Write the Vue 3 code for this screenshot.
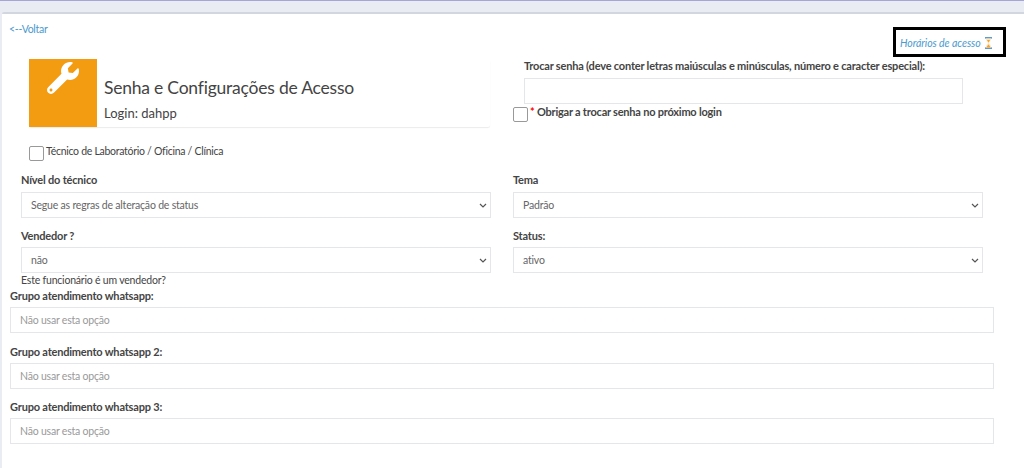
<template>
  <div class="page">
    <div class="topbar"></div>
    <main class="card">
      <div class="toprow">
        <a class="link back">&lt;--Voltar</a>
        <div class="hours">
          <a class="link italic">Horários de acesso</a>
          <svg class="glass" viewBox="0 0 9 12" width="9" height="12">
            <rect x="1" y="0" width="7" height="1.6" fill="#5b9bd0" />
            <rect x="1" y="10.4" width="7" height="1.6" fill="#5b9bd0" />
            <path d="M2 1.6h5C7 4 5.2 5 5 6c.2 1 2 2 2 4.4H2C2 8 3.8 7 4 6 3.8 5 2 4 2 1.6z" fill="#fde6bd" />
            <path d="M2.6 10.4C3 9 4 8 4.5 7.4 5 8 6 9 6.4 10.4zM3 3h3L4.5 5.4z" fill="#f5a32c" />
          </svg>
        </div>
      </div>

      <div class="columns">
        <div class="col-left">
          <div class="infobox">
            <div class="infoicon">
              <svg viewBox="0 0 512 512" width="32" height="32">
                <path fill="#fff" d="M507.73 109.1c-2.24-9.03-13.54-12.09-20.12-5.51l-74.36 74.36-67.88-11.31-11.31-67.88 74.36-74.36c6.62-6.62 3.43-17.9-5.66-20.16-47.38-11.74-99.55.91-136.58 37.93-39.64 39.64-50.55 97.1-34.05 147.2L18.74 402.76c-24.99 24.99-24.99 65.51 0 90.5 24.99 24.99 65.51 24.99 90.5 0l213.21-213.21c50.12 16.71 107.47 5.68 147.37-34.22 37.07-37.07 49.7-89.32 37.91-136.73zM64 472c-13.25 0-24-10.75-24-24 0-13.26 10.75-24 24-24s24 10.74 24 24c0 13.25-10.75 24-24 24z" />
              </svg>
            </div>
            <div class="infotext">
              <div class="title">Senha e Configurações de Acesso</div>
              <div class="login">Login: dahpp</div>
            </div>
          </div>
          <label class="check tech"><span class="box"></span><span class="techtext">Técnico de Laboratório / Oficina / Clínica</span></label>
        </div>
        <div class="col-right">
          <div class="label">Trocar senha (deve conter letras maiúsculas e minúsculas, número e caracter especial):</div>
          <div class="control pass"></div>
          <label class="check force"><span class="box"></span><span class="label forcetext"><span class="req">*</span> Obrigar a trocar senha no próximo login</span></label>
        </div>
      </div>

      <div class="formgrid">
        <div class="field">
          <div class="label">Nível do técnico</div>
          <div class="control select"><span>Segue as regras de alteração de status</span><svg class="chev" viewBox="0 0 8 5" width="8" height="5"><path d="M1 1l3 3 3-3" fill="none" stroke="#555" stroke-width="1.2" /></svg></div>
        </div>
        <div class="field">
          <div class="label">Tema</div>
          <div class="control select"><span>Padrão</span><svg class="chev" viewBox="0 0 8 5" width="8" height="5"><path d="M1 1l3 3 3-3" fill="none" stroke="#555" stroke-width="1.2" /></svg></div>
        </div>
        <div class="field">
          <div class="label">Vendedor ?</div>
          <div class="control select"><span>não</span><svg class="chev" viewBox="0 0 8 5" width="8" height="5"><path d="M1 1l3 3 3-3" fill="none" stroke="#555" stroke-width="1.2" /></svg></div>
          <div class="hint">Este funcionário é um vendedor?</div>
        </div>
        <div class="field">
          <div class="label">Status:</div>
          <div class="control select"><span>ativo</span><svg class="chev" viewBox="0 0 8 5" width="8" height="5"><path d="M1 1l3 3 3-3" fill="none" stroke="#555" stroke-width="1.2" /></svg></div>
        </div>
      </div>

      <div class="groups">
        <div class="group" v-for="g in groups" :key="g">
          <div class="label">{{ g }}</div>
          <div class="control placeholder">Não usar esta opção</div>
        </div>
      </div>
    </main>
  </div>
</template>

<script setup>
const groups = [
  'Grupo atendimento whatsapp:',
  'Grupo atendimento whatsapp 2:',
  'Grupo atendimento whatsapp 3:'
]
</script>

<style>
html, body { margin: 0; background: #fff; }
</style>

<style scoped>
.page {
  width: 1024px;
  height: 468px;
  overflow: hidden;
  background: #e9ecf3;
  font-family: Lato, "Noto Sans", sans-serif;
  font-size: 11px;
  color: #444;
  box-sizing: border-box;
  border-top: 1px solid #a6a6d6;
}
.topbar { height: 11px; }
.card {
  margin-left: 2px;
  height: 456px;
  background: #fff;
  border-top: 2px solid #d2d6de;
  border-radius: 2px 0 0 0;
  padding-left: 8px;
  box-sizing: border-box;
}
.toprow {
  display: flex;
  justify-content: space-between;
  align-items: flex-start;
  padding-top: 8px;
}
.link { color: #4a9ace; font-size: 10.5px; line-height: 14px; }
.back { margin-left: -1px; letter-spacing: -0.3px; }
.italic { font-style: italic; letter-spacing: -0.05px; }
.hours {
  margin: 5px 18px 0 0;
  width: 113px;
  height: 30px;
  box-sizing: border-box;
  border: 3px solid #000;
  display: flex;
  align-items: center;
  padding: 1px 0 0 4px;
  gap: 3px;
}
.columns { display: flex; margin-top: 2px; }
.col-left { width: 461px; margin-left: 19px; }
.col-right { margin-left: 34px; width: 440px; }
.infobox {
  height: 68px;
  display: flex;
  box-shadow: 0 1px 1px rgba(0, 0, 0, 0.08);
  border-radius: 2px;
}
.infoicon {
  width: 68px;
  height: 68px;
  background: #f39c12;
  display: flex;
  justify-content: center;
  padding-top: 3px;
  box-sizing: border-box;
}
.infotext { padding: 17px 0 0 7px; }
.title { font-size: 17.5px; line-height: 24px; color: #444; letter-spacing: -0.22px; }
.login { font-size: 13px; line-height: 18px; margin-top: 4px; color: #444; }
.label { font-weight: 700; font-size: 11px; line-height: 14px; color: #444; letter-spacing: -0.19px; }
.check { display: flex; align-items: flex-start; }
.box {
  width: 15px;
  height: 15px;
  border: 1.5px solid #999;
  border-radius: 2px;
  background: #fff;
  flex: none;
  box-sizing: border-box;
}
.tech { margin-top: 19px; gap: 2px; font-size: 10.5px; line-height: 13px; letter-spacing: -0.28px; }
.techtext { margin-top: -1px; }
.force { margin-left: -11px; margin-top: 3px; gap: 2px; }
.forcetext { margin-top: -2px; letter-spacing: -0.22px; }
.req { color: #f00; }
.control {
  background: #fff;
  border: 1px solid #e4e6ea;
  box-sizing: border-box;
  height: 26px;
  display: flex;
  align-items: center;
  color: #666;
  font-size: 10.5px;
  letter-spacing: -0.2px;
}
.pass { width: 439px; margin-top: 5px; }
.formgrid {
  display: grid;
  grid-template-columns: 470px 470px;
  column-gap: 22px;
  margin: 13px 0 0 11px;
  row-gap: 0;
}
.field { height: 55px; }
.field .label { margin-bottom: 4px; }
.field:nth-child(-n + 2) .label { margin-top: -1px; margin-bottom: 5px; }
.select { justify-content: space-between; padding: 0 3px 0 9px; }
.chev { flex: none; }
.hint { font-size: 10.5px; line-height: 14px; color: #444; letter-spacing: -0.2px; }
.groups { margin-top: 5px; }
.group { height: 55.5px; }
.group .label { margin-bottom: 4px; }
.placeholder { padding-left: 9px; color: #999; width: 984px; }
</style>
